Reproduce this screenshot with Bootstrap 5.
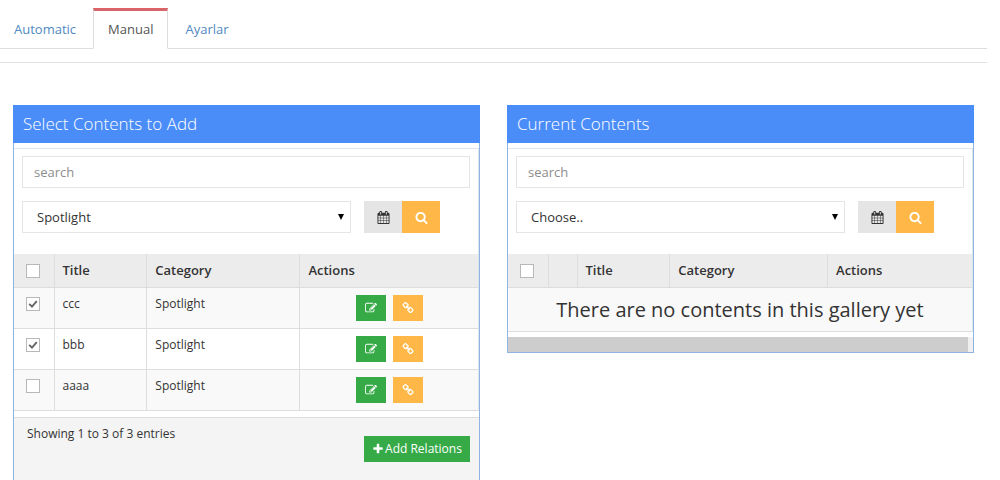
<!DOCTYPE html>
<html lang="en">
<head>
<meta charset="utf-8">
<meta name="viewport" content="width=device-width, initial-scale=1">
<title>Gallery contents</title>
<link href="https://cdn.jsdelivr.net/npm/bootstrap@5.3.0/dist/css/bootstrap.min.css" rel="stylesheet">
<style>
  body { font-family: "Open Sans", "Noto Sans", sans-serif; font-size: 13px; line-height: 20px; color: #333; padding-right: 13px; }
  .fa-icon { width: 13px; height: 13px; fill: currentColor; display: block; }
  .btn { border-radius: 0; border: 0; padding: 0; display: flex; align-items: center; justify-content: center; }

  .page-tabs { --bs-nav-tabs-border-color: #ddd; --bs-nav-tabs-border-radius: 0; padding-top: 8px; }
  .page-tabs .nav-link { color: #4f8ac2; padding: 8px 16px 9px; border-top-width: 3px; line-height: 20px; }
  .page-tabs .nav-item:first-child .nav-link { padding-left: 13px; }
  .page-tabs .nav-link.active { color: #555; padding: 8px 14px 9px; border-color: #d9646a #ddd #fff; }
  .tab-rule { height: 14px; border-bottom: 1px solid #e2e2e2; }

  .panels { display: grid; grid-template-columns: 1fr 1fr; gap: 27px; padding: 42px 13px 0; align-items: start; }
  .panel-box { border: 1px solid #8fb3e3; border-top: 0; min-width: 0; }
  .panel-box:has(.panel-foot) { border-bottom: 0; }
  .panel-title { background: #4b8df8; color: #fff; font-size: 17px; font-weight: 300; line-height: 24px; margin: 0 -1px 5px; padding: 7px 10px; }
  .panel-inner { border: 1px solid #dde6f0; border-bottom: 0; border-left: 0; }
  .filters { padding: 7px 8px 21px; }
  .form-control, .form-select { border: 1px solid #e5e5e5; border-radius: 0; font-size: 13px; line-height: 20px; height: 32px; color: #333; }
  .form-control { padding: 5px 11px; margin-bottom: 13px; }
  .form-control::placeholder { color: #8c8c8c; }
  .form-select { padding: 5px 14px; background-image: url("data:image/svg+xml,%3csvg xmlns='http://www.w3.org/2000/svg' viewBox='0 0 6 6'%3e%3cpath d='M0 0h6L3 6z'/%3e%3c/svg%3e"); background-size: 6px 6px; background-position: right 6px center; }
  .filter-row { display: flex; padding-right: 30px; gap: 13px; }
  .filter-buttons { display: flex; flex: none; }
  .filter-buttons .btn { width: 38px; height: 32px; }
  .btn-date { background: #e5e5e5; color: #333; }
  .btn-amber { background: #ffb848; color: #fff; }
  .btn-leaf { background: #35aa47; color: #fff; }

  .grid-table { table-layout: fixed; margin: 0; font-size: 12px; line-height: 17px; color: #333; border-color: #ddd; }
  .grid-table > :not(caption) > * > * { padding: 7px 8px; border-width: 0 0 1px 1px; color: #333; background: #fff; box-shadow: none; }
  .grid-table > :not(caption) > * > :first-child { border-left: 0; padding-left: 12px; padding-right: 0; }
  .grid-table > thead > tr > th { font-size: 13px; line-height: 19px; font-weight: 600; background: #ececec; }
  .grid-table > tbody > tr:nth-child(odd) > td { background: #f9f9f9; }
  .grid-table > tbody > tr > td.empty-note:first-child { font-size: 20px; line-height: 29px; text-align: center; padding: 7px 0; }
  .col-tick { width: 40px; }
  .col-blank { width: 29px; }
  .col-title { width: 20%; }
  .col-category { width: 33%; }
  .current-table .col-category { width: 34%; }
  .form-check-input { display: block; width: 14px; height: 14px; margin: 2px 0; border: 1px solid #b8b8b8; }
  .form-check-input[type=checkbox] { border-radius: 0; }
  .form-check-input:checked[type=checkbox] { background-color: #fff; border-color: #b8b8b8; background-image: url("data:image/svg+xml,%3csvg xmlns='http://www.w3.org/2000/svg' viewBox='0 0 12 12'%3e%3cpath d='M2.2 5.8l2.8 2.9 4.8-5.5' fill='none' stroke='%23666' stroke-width='1.9'/%3e%3c/svg%3e"); }
  .row-actions { display: flex; justify-content: center; gap: 7px; }
  .row-actions .btn { height: 26px; width: 30px; }
  .row-actions .fa-icon, .btn-add .fa-icon { width: 12px; height: 12px; }

  .panel-foot { margin-top: 6px; border-top: 1px solid #ddd; background: #f4f4f4; min-height: 63px; display: flex; justify-content: space-between; padding: 7px 9px 0 13px; font-size: 12px; line-height: 18px; }
  .btn-add { font-size: 12px; line-height: 18px; height: 26px; width: 106px; margin-top: 11px; gap: 1px; }
  .scroll-track { height: 15px; margin-top: 5px; background: #f0f0f0; }
  .scroll-thumb { height: 100%; width: 99%; background: #cdcdcd; }
</style>
</head>
<body>
<svg class="d-none" aria-hidden="true">
  <symbol id="i-search" viewBox="0 0 1792 1792"><path d="M1216 832q0-185-131.500-316.500t-316.500-131.500-316.500 131.500-131.500 316.500 131.500 316.500 316.500 131.500 316.500-131.500 131.500-316.500zm512 832q0 52-38 90t-90 38q-54 0-90-38l-343-342q-179 124-399 124-143 0-273.500-55.500t-225-150-150-225-55.500-273.500 55.500-273.500 150-225 225-150 273.500-55.500 273.500 55.500 225 150 150 225 55.500 273.500q0 220-124 399l343 343q37 37 37 90z"/></symbol>
  <symbol id="i-calendar" viewBox="0 0 1792 1792"><path d="M192 1664h288v-288h-288v288zm352 0h320v-288h-320v288zm-352-352h288v-320h-288v320zm352 0h320v-320h-320v320zm-352-384h288v-288h-288v288zm736 736h320v-288h-320v288zm-384-736h320v-288h-320v288zm768 736h288v-288h-288v288zm-384-352h320v-320h-320v320zm-352-864v-288q0-13-9.500-22.500t-22.500-9.500h-64q-13 0-22.500 9.500t-9.500 22.500v288q0 13 9.500 22.500t22.500 9.500h64q13 0 22.500-9.500t9.500-22.500zm736 864h288v-320h-288v320zm-384-384h320v-288h-320v288zm384 0h288v-288h-288v288zm32-480v-288q0-13-9.500-22.500t-22.500-9.500h-64q-13 0-22.500 9.500t-9.500 22.500v288q0 13 9.500 22.500t22.500 9.500h64q13 0 22.500-9.500t9.500-22.500zm384-64v1280q0 52-38 90t-90 38h-1408q-52 0-90-38t-38-90v-1280q0-52 38-90t90-38h128v-96q0-66 47-113t113-47h64q66 0 113 47t47 113v96h384v-96q0-66 47-113t113-47h64q66 0 113 47t47 113v96h128q52 0 90 38t38 90z"/></symbol>
  <symbol id="i-edit" viewBox="0 0 1792 1792"><path d="M888 1184l116-116-152-152-116 116v56h96v96h56zm440-720q-16-16-33 1l-350 350q-17 17-1 33t33-1l350-350q17-17 1-33zm80 594v190q0 119-84.500 203.500t-203.500 84.500h-832q-119 0-203.500-84.500t-84.500-203.500v-832q0-119 84.500-203.500t203.500-84.500h832q63 0 117 25 15 7 18 23 3 17-9 29l-49 49q-14 14-32 8-23-6-45-6h-832q-66 0-113 47t-47 113v832q0 66 47 113t113 47h832q66 0 113-47t47-113v-126q0-13 9-22l64-64q15-15 35-7t20 29zm-96-738l288 288-672 672h-288v-288zm444 132l-92 92-288-288 92-92q28-28 68-28t68 28l152 152q28 28 28 68t-28 68z"/></symbol>
  <symbol id="i-link" viewBox="0 0 1792 1792"><path d="M1520 1216q0-40-28-68l-208-208q-28-28-68-28-42 0-72 32 3 3 19 18.500t21.500 21.500 15 19 13 25.500 3.500 27.500q0 40-28 68t-68 28q-15 0-27.500-3.500t-25.500-13-19-15-21.500-21.500-18.500-19q-33 31-33 73 0 40 28 68l206 207q27 27 68 27 40 0 68-26l147-146q28-28 28-67zm-703-705q0-40-28-68l-206-207q-28-28-68-28-39 0-68 27l-147 146q-28 28-28 67 0 40 28 68l208 208q27 27 68 27 42 0 72-31-3-3-19-18.500t-21.500-21.500-15-19-13-25.500-3.500-27.500q0-40 28-68t68-28q15 0 27.500 3.500t25.500 13 19 15 21.500 21.500 18.500 19q33-31 33-73zm895 705q0 120-85 203l-147 146q-83 83-203 83-121 0-204-85l-206-207q-83-83-83-203 0-123 88-209l-88-88q-86 88-208 88-120 0-204-84l-208-208q-84-84-84-204t85-203l147-146q83-83 203-83 121 0 204 85l206 207q83 83 83 203 0 123-88 209l88 88q86-88 208-88 120 0 204 84l208 208q84 84 84 204z"/></symbol>
  <symbol id="i-plus" viewBox="0 0 1792 1792"><path d="M1600 736v192q0 40-28 68t-68 28h-416v416q0 40-28 68t-68 28h-192q-40 0-68-28t-28-68v-416h-416q-40 0-68-28t-28-68v-192q0-40 28-68t68-28h416v-416q0-40 28-68t68-28h192q40 0 68 28t28 68v416h416q40 0 68 28t28 68z"/></symbol>
</svg>

<ul class="nav nav-tabs page-tabs">
  <li class="nav-item"><a class="nav-link" href="#automatic">Automatic</a></li>
  <li class="nav-item"><a class="nav-link active" aria-current="page" href="#manual">Manual</a></li>
  <li class="nav-item"><a class="nav-link" href="#ayarlar">Ayarlar</a></li>
</ul>
<div class="tab-rule"></div>

<main class="panels">
  <section class="panel-box">
    <h2 class="panel-title">Select Contents to Add</h2>
    <div class="panel-inner">
      <div class="filters">
        <input class="form-control" type="text" placeholder="search" aria-label="Search contents">
        <div class="filter-row">
          <select class="form-select" aria-label="Category"><option>Spotlight</option></select>
          <div class="filter-buttons">
            <button class="btn btn-date" type="button" aria-label="Pick date"><svg class="fa-icon"><use href="#i-calendar"/></svg></button>
            <button class="btn btn-amber" type="button" aria-label="Search"><svg class="fa-icon"><use href="#i-search"/></svg></button>
          </div>
        </div>
      </div>
      <table class="table grid-table">
        <colgroup><col class="col-tick"><col class="col-title"><col class="col-category"><col></colgroup>
        <thead>
          <tr><th><input class="form-check-input" type="checkbox" aria-label="Select all"></th><th>Title</th><th>Category</th><th>Actions</th></tr>
        </thead>
        <tbody>
          <tr>
            <td><input class="form-check-input" type="checkbox" checked aria-label="Select ccc"></td><td>ccc</td><td>Spotlight</td>
            <td><div class="row-actions"><button class="btn btn-leaf" type="button" aria-label="Edit"><svg class="fa-icon"><use href="#i-edit"/></svg></button><button class="btn btn-amber" type="button" aria-label="Link"><svg class="fa-icon"><use href="#i-link"/></svg></button></div></td>
          </tr>
          <tr>
            <td><input class="form-check-input" type="checkbox" checked aria-label="Select bbb"></td><td>bbb</td><td>Spotlight</td>
            <td><div class="row-actions"><button class="btn btn-leaf" type="button" aria-label="Edit"><svg class="fa-icon"><use href="#i-edit"/></svg></button><button class="btn btn-amber" type="button" aria-label="Link"><svg class="fa-icon"><use href="#i-link"/></svg></button></div></td>
          </tr>
          <tr>
            <td><input class="form-check-input" type="checkbox" aria-label="Select aaaa"></td><td>aaaa</td><td>Spotlight</td>
            <td><div class="row-actions"><button class="btn btn-leaf" type="button" aria-label="Edit"><svg class="fa-icon"><use href="#i-edit"/></svg></button><button class="btn btn-amber" type="button" aria-label="Link"><svg class="fa-icon"><use href="#i-link"/></svg></button></div></td>
          </tr>
        </tbody>
      </table>
    </div>
    <div class="panel-foot">
      <span>Showing 1 to 3 of 3 entries</span>
      <button class="btn btn-leaf btn-add" type="button"><svg class="fa-icon"><use href="#i-plus"/></svg>Add Relations</button>
    </div>
  </section>

  <section class="panel-box">
    <h2 class="panel-title">Current Contents</h2>
    <div class="panel-inner">
      <div class="filters">
        <input class="form-control" type="text" placeholder="search" aria-label="Search current contents">
        <div class="filter-row">
          <select class="form-select" aria-label="Current category"><option>Choose..</option></select>
          <div class="filter-buttons">
            <button class="btn btn-date" type="button" aria-label="Pick date"><svg class="fa-icon"><use href="#i-calendar"/></svg></button>
            <button class="btn btn-amber" type="button" aria-label="Search"><svg class="fa-icon"><use href="#i-search"/></svg></button>
          </div>
        </div>
      </div>
      <table class="table grid-table current-table">
        <colgroup><col class="col-tick"><col class="col-blank"><col class="col-title"><col class="col-category"><col></colgroup>
        <thead>
          <tr><th><input class="form-check-input" type="checkbox" aria-label="Select all current"></th><th></th><th>Title</th><th>Category</th><th>Actions</th></tr>
        </thead>
        <tbody>
          <tr><td colspan="5" class="empty-note">There are no contents in this gallery yet</td></tr>
        </tbody>
      </table>
    </div>
    <div class="scroll-track"><div class="scroll-thumb"></div></div>
  </section>
</main>
<script src="https://cdn.jsdelivr.net/npm/bootstrap@5.3.0/dist/js/bootstrap.bundle.min.js"></script>
</body>
</html>
